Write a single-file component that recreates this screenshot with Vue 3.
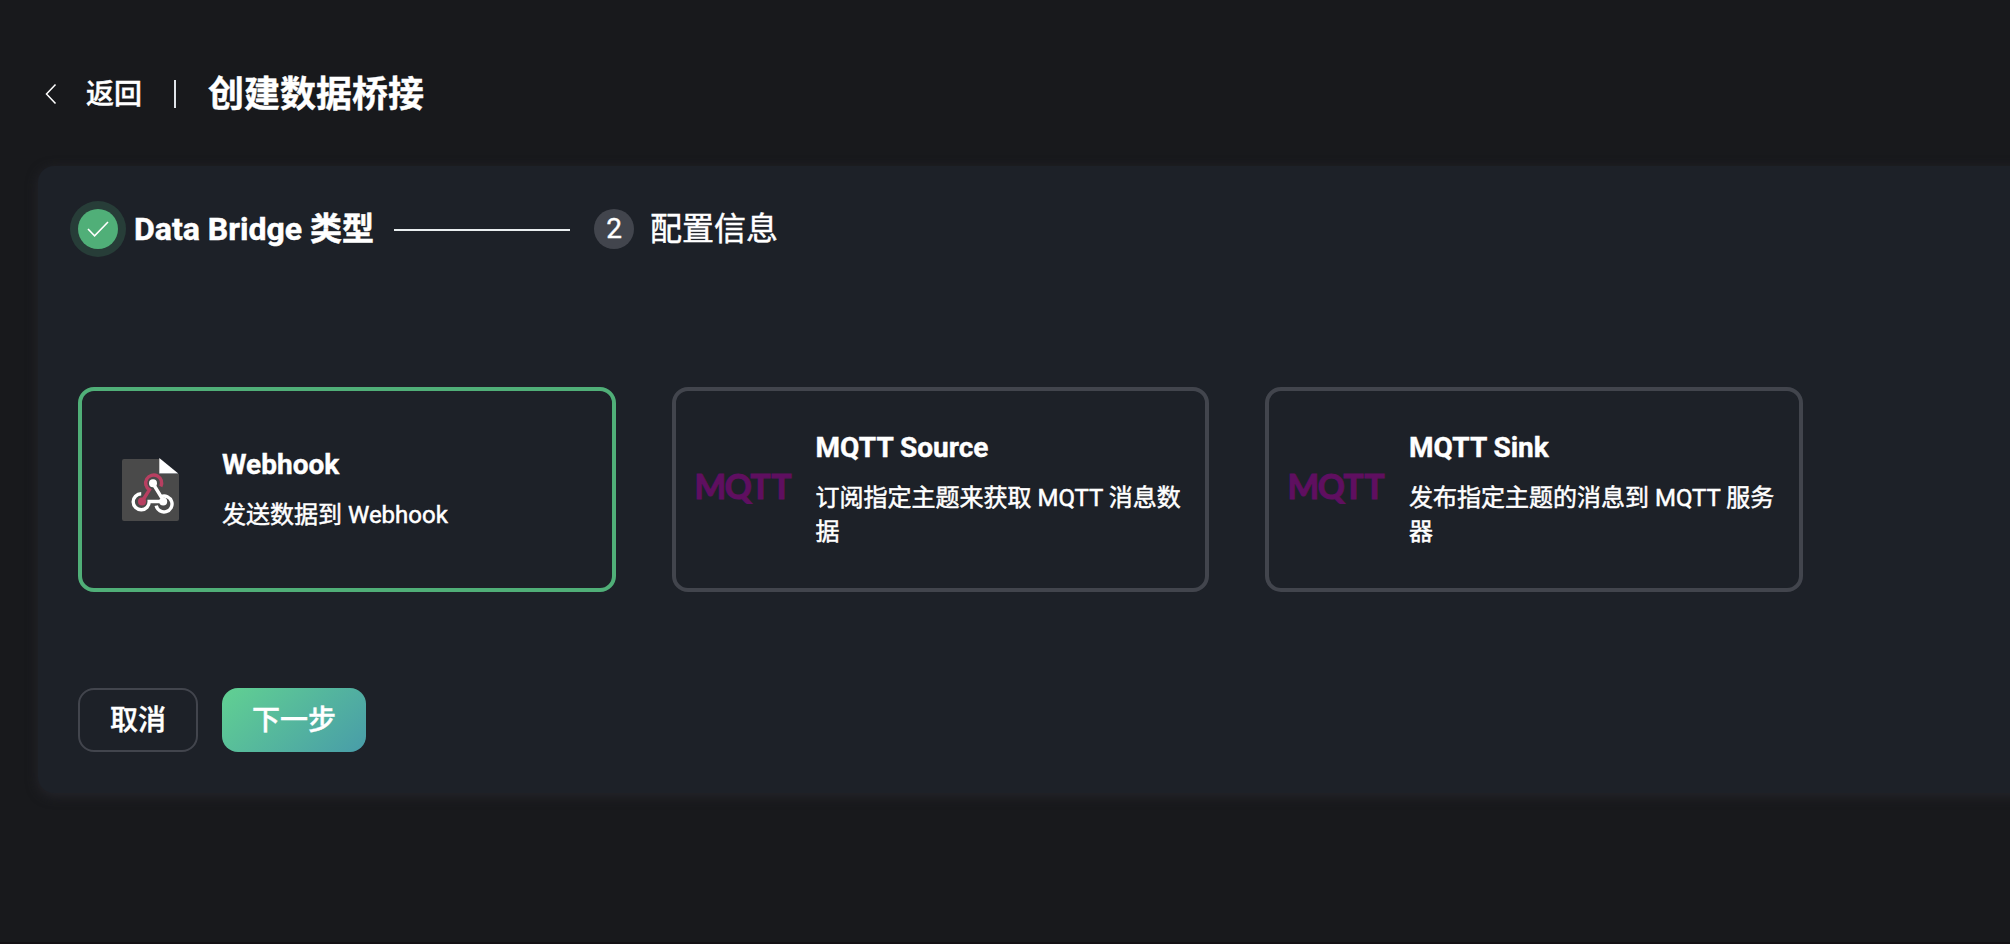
<script setup>
import { ref } from 'vue'

const bridges = [
  { id: 'webhook', title: 'Webhook', desc: '发送数据到 Webhook' },
  { id: 'source', title: 'MQTT Source', desc: '订阅指定主题来获取 MQTT 消息数据' },
  { id: 'sink', title: 'MQTT Sink', desc: '发布指定主题的消息到 MQTT 服务器' },
]
const selected = ref('webhook')
</script>

<template>
  <div class="page">
    <header class="head">
      <svg class="chevron" width="12" height="22" viewBox="0 0 12 22">
        <path d="M10.5 1.5 1.5 11l9 9.5" fill="none" stroke="#fff" stroke-width="1.5" />
      </svg>
      <a class="back">返回</a>
      <span class="divider"></span>
      <h1 class="title">创建数据桥接</h1>
    </header>

    <main class="panel">
      <div class="steps">
        <span class="dot done">
          <svg width="24" height="18" viewBox="0 0 24 18">
            <path d="M2 9l6.6 6.8L22 2" fill="none" stroke="#fff" stroke-width="1.6" />
          </svg>
        </span>
        <span class="label strong">Data Bridge 类型</span>
        <span class="line"></span>
        <span class="dot">2</span>
        <span class="label">配置信息</span>
      </div>

      <div class="cards">
        <div
          v-for="b in bridges"
          :key="b.id"
          class="card"
          :class="{ active: selected === b.id }"
          @click="selected = b.id"
        >
          <div class="logo">
            <svg v-if="b.id === 'webhook'" class="hook" width="58" height="64" viewBox="0 0 58 64">
              <path d="M2 1H38V16H57V61a2 2 0 0 1-2 2H2a2 2 0 0 1-2-2V3a2 2 0 0 1 2-2Z" fill="#4a4a4a" />
              <path d="M37.3 0V15.6H56.3Z" fill="#fff" />
              <g fill="none" stroke-width="3.4">
                <path d="M20 43.5 27.4 31.8A8 8 0 1 1 38.8 28.6" stroke="#b83f61" />
                <path d="M31 25.5 39 38.6A8 8 0 1 1 34.2 47.6" stroke="#fff" />
                <path d="M19.2 35.8A8 8 0 1 0 27.2 43.5H41.5" stroke="#fff" />
              </g>
              <circle cx="20" cy="43.5" r="4" fill="#b83f61" />
              <circle cx="31" cy="25.3" r="4" fill="#fff" />
              <circle cx="41.2" cy="43.6" r="4" fill="#fff" />
            </svg>
            <svg v-else class="mqtt" width="110" height="48" viewBox="0 0 110 48">
              <text x="6.5 36.8 62.4 83.4" y="33.2">MQTT</text>
            </svg>
          </div>
          <div class="info">
            <div class="name">{{ b.title }}</div>
            <div class="desc">{{ b.desc }}</div>
          </div>
        </div>
      </div>

      <div class="actions">
        <button class="btn">取消</button>
        <button class="btn primary">下一步</button>
      </div>
    </main>
  </div>
</template>

<style>
html,
body {
  background: #18191c;
  overflow: hidden;
}
</style>

<style scoped>
.page {
  box-sizing: border-box;
  height: 944px;
  padding-left: 38px;
  overflow: hidden;
  border-bottom: 2px solid #131014;
  background: #18191c;
  color: #fff;
  font-family: Roboto, "Noto Sans CJK SC", sans-serif;
}
.head {
  display: flex;
  align-items: center;
  height: 166px;
  padding: 20px 0 0 7px;
  box-sizing: border-box;
}
.chevron {
  margin-top: 1px;
}
.back {
  margin: 0 1px 2px 29px;
  font-size: 28px;
  font-weight: 500;
  -webkit-text-stroke: 0.4px #fff;
}
.divider {
  width: 2px;
  height: 28px;
  margin: 2px 32px 0 31px;
  background: #dfe3e8;
}
.title {
  margin: 0 0 4px;
  font-size: 36px;
  font-weight: 700;
  -webkit-text-stroke: 0.4px #fff;
}
.panel {
  box-sizing: border-box;
  width: 2040px;
  height: 627px;
  padding: 43px 40px 0;
  border-radius: 16px;
  background: #1d2128;
  box-shadow: 0 3px 12px #25252b;
}
.steps {
  display: flex;
  align-items: center;
  height: 40px;
}
.dot {
  display: flex;
  align-items: center;
  justify-content: center;
  width: 40px;
  height: 40px;
  border-radius: 50%;
  background: #42454d;
  font-size: 28px;
  line-height: 38px;
  padding-bottom: 1px;
  box-sizing: border-box;
  -webkit-text-stroke: 0.4px #fff;
}
.dot.done {
  padding-bottom: 0;
  background: #50af78;
  box-shadow: 0 0 0 8px #273d38;
}
.label {
  margin-left: 16px;
  font-size: 32px;
  line-height: 40px;
  white-space: nowrap;
  -webkit-text-stroke: 0.5px #fff;
}
.label.strong {
  width: 240px;
  font-weight: 700;
}
.line {
  width: 176px;
  height: 2px;
  margin: 2px 24px 0 20px;
  background: #e9eef0;
}
.cards {
  display: flex;
  gap: 56px;
  margin-top: 138px;
}
.card {
  box-sizing: border-box;
  display: flex;
  align-items: center;
  width: 537.5px;
  height: 205px;
  border: 4px solid #42454d;
  border-radius: 16px;
}
.card.active {
  border-color: #50af78;
}
.logo {
  flex: none;
  width: 140px;
}
.logo svg {
  display: block;
}
.hook {
  margin-left: 39.5px;
}
.mqtt {
  margin-left: 12px;
}
.mqtt text {
  fill: #5f0f60;
  stroke: #5f0f60;
  stroke-width: 1.1px;
  font-family: Lato, sans-serif;
  font-size: 33.5px;
  font-weight: 700;
}
.info {
  width: 372px;
  padding-bottom: 1px;
}
.name {
  font-size: 28px;
  font-weight: 700;
  line-height: 38px;
  -webkit-text-stroke: 0.4px #fff;
}
.desc {
  margin-top: 14px;
  font-size: 24px;
  line-height: 34px;
  -webkit-text-stroke: 0.5px #fff;
}
.actions {
  display: flex;
  gap: 24px;
  margin-top: 96px;
}
.btn {
  box-sizing: border-box;
  width: 120px;
  height: 64px;
  padding: 0 0 4px;
  border: 2px solid #42454d;
  border-radius: 16px;
  background: transparent;
  color: #fff;
  font-family: inherit;
  font-size: 28px;
  font-weight: 500;
  -webkit-text-stroke: 0.4px #fff;
}
.btn.primary {
  width: 144px;
  border: 0;
  background: linear-gradient(137deg, #60ce93 5%, #499ea8 97%);
}
</style>
